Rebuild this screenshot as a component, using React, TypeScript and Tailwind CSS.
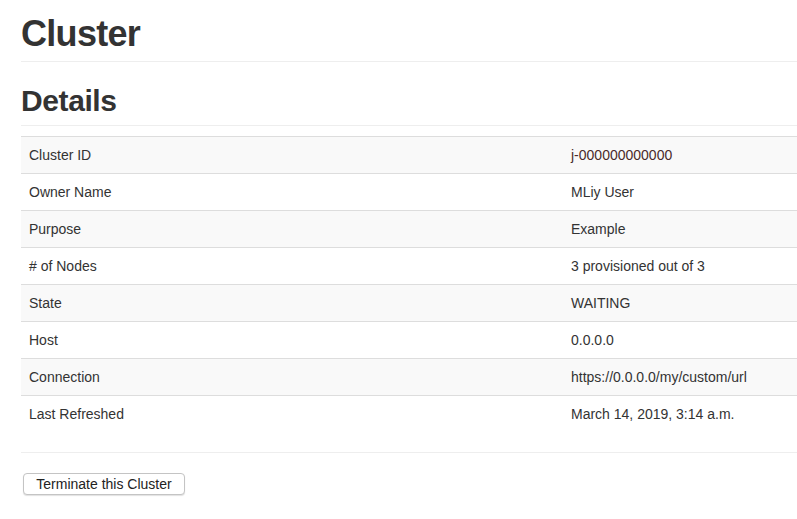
import React from "react";

const rows: [string, string][] = [
  ["Cluster ID", "j-000000000000"],
  ["Owner Name", "MLiy User"],
  ["Purpose", "Example"],
  ["# of Nodes", "3 provisioned out of 3"],
  ["State", "WAITING"],
  ["Host", "0.0.0.0"],
  ["Connection", "https://0.0.0.0/my/custom/url"],
  ["Last Refreshed", "March 14, 2019, 3:14 a.m."],
];

export default function App() {
  return (
    <div
      className="min-h-[519px] bg-white pl-[21px] text-[14px] leading-[20px] text-[#333]"
      style={{ fontFamily: '"Liberation Sans", Arial, sans-serif' }}
    >
      <div className="pt-[14px] pb-[7px] border-b border-[#eee]">
        <h1 className="text-[36px] leading-[40px] font-bold tracking-[-0.7px]">Cluster</h1>
      </div>
      <div className="mt-[22px] pb-[8px] border-b border-[#eee]">
        <h2 className="text-[30px] leading-[33px] font-bold tracking-[-0.4px]">Details</h2>
      </div>
      <table className="mt-[10px] w-full border-collapse">
        <tbody>
          {rows.map(([k, v], i) => (
            <tr key={k} className={i % 2 === 0 ? "bg-[#f9f9f9]" : ""}>
              <td className="w-[542px] border-t border-[#ddd] px-[8px] py-[8px]">{k}</td>
              <td className="border-t border-[#ddd] px-[8px] py-[8px]">
                {i === 0 ? <span className="text-[#4a2a2a]">{v}</span> : v}
              </td>
            </tr>
          ))}
        </tbody>
      </table>
      <div className="mt-[20px] border-t border-[#eee]" />
      <div className="mt-[20px] pl-[2px]">
        <button className="h-[22px] w-[162px] rounded-[4px] border border-[#c4c4c4] bg-white text-[14px] leading-[20px] text-[#222] shadow-[0_1px_1px_rgba(0,0,0,0.12)]">
          Terminate this Cluster
        </button>
      </div>
    </div>
  );
}
